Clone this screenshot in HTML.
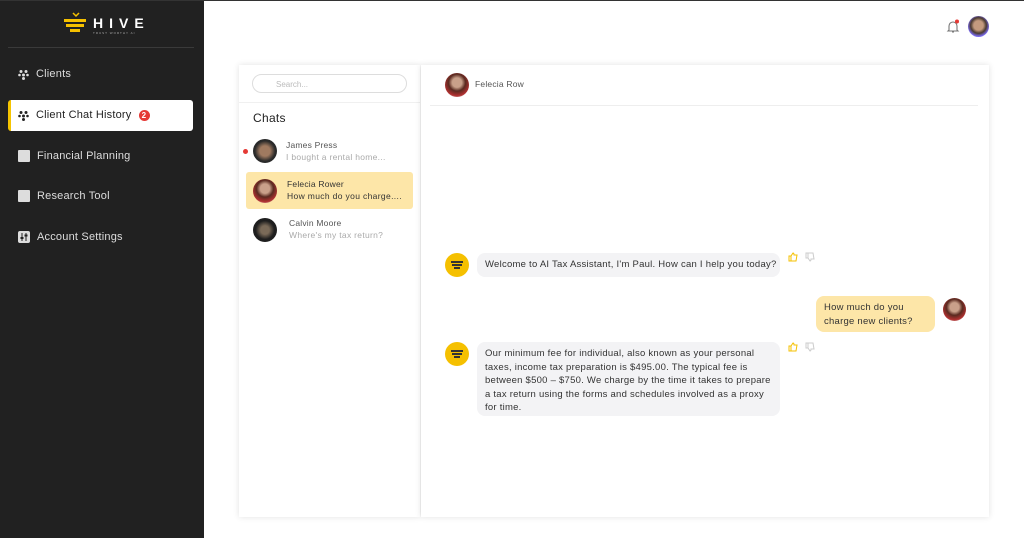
<!DOCTYPE html>
<html><head><meta charset="utf-8"><style>
*{margin:0;padding:0;box-sizing:border-box}
body{width:1024px;height:538px;overflow:hidden;background:#fff;font-family:"Liberation Sans",sans-serif;position:relative}
.top{position:absolute;left:0;top:0;width:1024px;height:1px;background:#333}
.sb{position:absolute;left:0;top:0;width:204px;height:538px;background:#212121}
.sep{position:absolute;left:8px;top:47px;width:186px;height:1px;background:#3a3a3a}
.nav{position:absolute;left:18px;color:#ddd;font-size:11px;display:flex;align-items:center;gap:7px;letter-spacing:.2px}
.ic{width:12px;height:12px;background:#ddd;border-radius:1px}
.act{position:absolute;left:8px;top:100px;width:185px;height:31px;background:#fff;border-radius:3px;border-left:3px solid #f5c400}
.panel{position:absolute;background:#fff;box-shadow:0 0 6px rgba(0,0,0,.12)}
.av{border-radius:50%;position:absolute}
.bub{position:absolute;background:#f3f3f5;border-radius:8px;font-size:9.5px;color:#333;line-height:13.5px;padding:0 8px;letter-spacing:.25px;white-space:nowrap}
.bee{position:absolute;width:24px;height:24px;border-radius:50%;background:#f5c000}
.bee i{position:absolute;left:6px;width:12px;height:1.5px;background:#333}
</style></head><body>
<div class="sb">
 <svg style="position:absolute;left:62px;top:10px" width="30" height="28"><path d="M11 3l3 3 3-3" stroke="#f5c000" fill="none" stroke-width="1.5"/><rect x="2" y="9" width="22" height="3" fill="#f5c000"/><rect x="4" y="14" width="18" height="3" fill="#f5c000"/><rect x="8" y="19" width="10" height="3" fill="#f5c000"/></svg>
 <div style="position:absolute;left:93px;top:15px;color:#fff;font-weight:bold;font-size:14px;letter-spacing:6px">HIVE</div>
 <div style="position:absolute;left:93px;top:31px;color:#aaa;font-size:3px;letter-spacing:1px">TRUST WORTHY AI</div>
 <div class="sep"></div>
 <div class="nav" style="top:68px"><svg width="11" height="11"><circle cx="3" cy="2.5" r="1.5" fill="#ddd"/><circle cx="8" cy="2.5" r="1.5" fill="#ddd"/><circle cx="1.5" cy="6" r="1.3" fill="#ddd"/><circle cx="9.5" cy="6" r="1.3" fill="#ddd"/><circle cx="5.5" cy="6" r="1.5" fill="#ddd"/><circle cx="5.5" cy="9.5" r="1.5" fill="#ddd"/></svg>Clients</div>
 <div class="act"></div>
 <div class="nav" style="top:109px;color:#222"><svg width="11" height="11"><circle cx="3" cy="2.5" r="1.5" fill="#222"/><circle cx="8" cy="2.5" r="1.5" fill="#222"/><circle cx="1.5" cy="6" r="1.3" fill="#222"/><circle cx="9.5" cy="6" r="1.3" fill="#222"/><circle cx="5.5" cy="6" r="1.5" fill="#222"/><circle cx="5.5" cy="9.5" r="1.5" fill="#222"/></svg>Client Chat History<span style="width:11px;height:11px;border-radius:50%;background:#e53935;color:#fff;font-size:8px;text-align:center;line-height:11px;font-weight:bold">2</span></div>
 <div class="nav" style="top:150px"><span class="ic"></span>Financial Planning</div>
 <div class="nav" style="top:190px"><span class="ic"></span>Research Tool</div>
 <div class="nav" style="top:231px"><svg width="12" height="12"><rect width="12" height="12" rx="2" fill="#ddd"/><path d="M4 2v8M8 2v8" stroke="#222" stroke-width="1"/><rect x="2.5" y="6" width="3" height="2" fill="#222"/><rect x="6.5" y="3.5" width="3" height="2" fill="#222"/></svg>Account Settings</div>
</div>
<div class="top"></div>
<svg style="position:absolute;left:946px;top:19px" width="14" height="16"><path d="M3 11V7a4 4 0 018 0v4l1 1H2z M6 13h2" stroke="#777" fill="none" stroke-width="1.1"/><circle cx="11" cy="2.5" r="2" fill="#e53935"/></svg>
<div class="av" style="left:968px;top:16px;width:21px;height:21px;background:radial-gradient(circle at 50% 45%,#c49a7f 30%,#4a3a30 50%,#7b6cf0 70%)"></div>

<div class="panel" style="left:239px;top:65px;width:181px;height:452px">
 <div style="position:absolute;left:13px;top:9px;width:155px;height:19px;border:1px solid #ddd;border-radius:10px;font-size:8px;color:#bbb;padding:5px 0 0 23px">Search...</div>
 <div style="position:absolute;left:0;top:37px;width:181px;height:1px;background:#f0f0f0"></div>
 <div style="position:absolute;left:14px;top:46px;font-size:12px;color:#222;letter-spacing:.3px">Chats</div>
 <div style="position:absolute;left:4px;top:84px;width:5px;height:5px;border-radius:50%;background:#e53935"></div>
 <div class="av" style="left:14px;top:74px;width:24px;height:24px;background:radial-gradient(circle,#a07a60 30%,#2a2a2a 60%)"></div>
 <div style="position:absolute;left:47px;top:75px;font-size:8.5px;color:#555;letter-spacing:.2px">James Press</div>
 <div style="position:absolute;left:47px;top:87px;font-size:8.5px;color:#aaa;letter-spacing:.3px">I bought a rental home...</div>
 <div style="position:absolute;left:7px;top:107px;width:167px;height:37px;background:#fde6a8;border-radius:3px"></div>
 <div class="av" style="left:14px;top:114px;width:24px;height:24px;background:radial-gradient(circle at 50% 40%,#c9a08a 25%,#5a2a20 45%,#b03030 70%,#ddd 90%)"></div>
 <div style="position:absolute;left:48px;top:114px;font-size:8.5px;color:#333;letter-spacing:.2px">Felecia Rower</div>
 <div style="position:absolute;left:48px;top:126px;font-size:8.5px;color:#333;letter-spacing:.35px">How much do you charge....</div>
 <div class="av" style="left:14px;top:153px;width:24px;height:24px;background:radial-gradient(circle,#7a6a58 25%,#1e1e1e 55%)"></div>
 <div style="position:absolute;left:50px;top:153px;font-size:8.5px;color:#555;letter-spacing:.2px">Calvin Moore</div>
 <div style="position:absolute;left:50px;top:165px;font-size:8.5px;color:#aaa;letter-spacing:.3px">Where's my tax return?</div>
</div>

<div class="panel" style="left:421px;top:65px;width:568px;height:452px">
 <div class="av" style="left:24px;top:8px;width:24px;height:24px;background:radial-gradient(circle at 50% 40%,#c9a08a 25%,#5a2a20 45%,#b03030 70%,#ddd 90%)"></div>
 <div style="position:absolute;left:54px;top:14px;font-size:8.5px;color:#555;letter-spacing:.2px">Felecia Row</div>
 <div style="position:absolute;left:9px;top:40px;width:548px;height:1px;background:#eee"></div>
 <div class="bee" style="left:24px;top:188px"><i style="top:8px"></i><i style="top:11px;left:7px;width:10px"></i><i style="top:14px;left:9px;width:6px"></i></div>
 <div class="bub" style="left:56px;top:188px;width:303px;height:24px;line-height:24px">Welcome to AI Tax Assistant, I'm Paul. How can I help you today?</div>
 <svg style="position:absolute;left:367px;top:187px" width="10" height="10"><path d="M1 4h2v5H1zM3 4l2-3c1 0 1 1 1 2h3l-1 6H3" fill="none" stroke="#f5c000" stroke-width="1"/></svg>
 <svg style="position:absolute;left:384px;top:187px" width="10" height="10"><path d="M1 1h2v5H1zM3 6l2 3c1 0 1-1 1-2h3L8 1H3" fill="none" stroke="#ccc" stroke-width="1"/></svg>
 <div class="bub" style="left:395px;top:231px;width:119px;height:36px;background:#fde6a8;padding-top:5px">How much do you<br>charge new clients?</div>
 <div class="av" style="left:522px;top:233px;width:23px;height:23px;background:radial-gradient(circle at 50% 40%,#c9a08a 25%,#5a2a20 45%,#b03030 70%,#ddd 90%)"></div>
 <div class="bee" style="left:24px;top:277px"><i style="top:8px"></i><i style="top:11px;left:7px;width:10px"></i><i style="top:14px;left:9px;width:6px"></i></div>
 <div class="bub" style="left:56px;top:277px;width:303px;height:74px;padding-top:5px">Our minimum fee for individual, also known as your personal<br>taxes, income tax preparation is $495.00. The typical fee is<br>between $500 – $750. We charge by the time it takes to prepare<br>a tax return using the forms and schedules involved as a proxy<br>for time.</div>
 <svg style="position:absolute;left:367px;top:277px" width="10" height="10"><path d="M1 4h2v5H1zM3 4l2-3c1 0 1 1 1 2h3l-1 6H3" fill="none" stroke="#f5c000" stroke-width="1"/></svg>
 <svg style="position:absolute;left:384px;top:277px" width="10" height="10"><path d="M1 1h2v5H1zM3 6l2 3c1 0 1-1 1-2h3L8 1H3" fill="none" stroke="#ccc" stroke-width="1"/></svg>
</div>
</body></html>
